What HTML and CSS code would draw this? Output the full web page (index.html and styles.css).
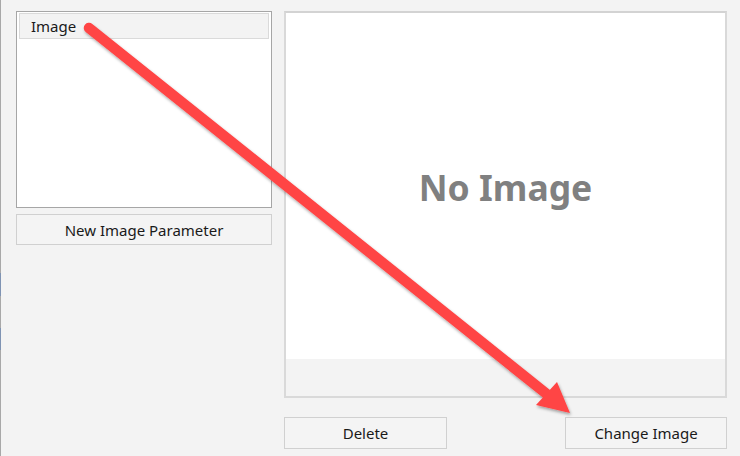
FILE: index.html
```html
<!DOCTYPE html>
<html>
<head>
<meta charset="utf-8">
<link rel="stylesheet" href="styles.css">
</head>
<body>
<div class="window">
  <div class="edge"></div>
  <div class="content">
    <div class="left">
      <div class="list">
        <div class="item">Image</div>
      </div>
      <button class="btn btn-new">New Image Parameter</button>
    </div>
    <div class="right">
      <div class="panel">
        <div class="preview"><span class="noimage">No Image</span></div>
        <div class="panel-foot"></div>
      </div>
      <div class="actions">
        <button class="btn btn-delete">Delete</button>
        <button class="btn btn-change">Change Image</button>
      </div>
    </div>
  </div>
  <svg class="arrow" width="740" height="456" viewBox="0 0 740 456">
    <defs>
      <filter id="sh" x="-10%" y="-10%" width="120%" height="120%">
        <feDropShadow dx="1" dy="2" stdDeviation="1.6" flood-color="#000" flood-opacity="0.35"/>
      </filter>
    </defs>
    <g filter="url(#sh)" fill="#ff4444" stroke="none">
      <line x1="89" y1="28" x2="548" y2="395" stroke="#ff4444" stroke-width="10.5" stroke-linecap="round"/>
      <polygon points="570,413 536,405 557,382"/>
    </g>
  </svg>
</div>
</body>
</html>
```
FILE: styles.css
```css
html, body {
  margin: 0;
  padding: 0;
  background: #f3f3f3;
}
body {
  font-family: "Noto Sans", "Open Sans", sans-serif;
  font-size: 15px;
  color: #1a1a1a;
}
.window {
  position: relative;
  width: 740px;
  height: 456px;
  display: flex;
  overflow: hidden;
}
.edge {
  width: 1px;
  flex: none;
  background: linear-gradient(to bottom, #a8a8a8 0, #a8a8a8 273px, #7f93b3 273px, #7f93b3 296px, #a8a8a8 296px, #a8a8a8 328px, #7f93b3 328px, #7f93b3 350px, #a8a8a8 350px);
}
.content {
  flex: 1;
  display: flex;
  gap: 12px;
  padding: 11px 0 0 15px;
}
.left {
  width: 256px;
  display: flex;
  flex-direction: column;
  gap: 6px;
}
.list {
  height: 197px;
  box-sizing: border-box;
  border: 1px solid #a6a6a6;
  background: #fff;
  padding: 1px 2px;
}
.item {
  height: 26px;
  box-sizing: border-box;
  border: 1px solid #dadada;
  background: #f3f3f3;
  padding-left: 11px;
  line-height: 24px;
  font-size: 15px;
}
.btn {
  font-family: inherit;
  font-size: 15px;
  color: #1a1a1a;
  background: #f4f4f4;
  border: 1px solid #d0d0d0;
  margin: 0;
  padding: 0;
  box-sizing: border-box;
}
.btn-new {
  height: 31px;
  width: 256px;
}
.right {
  width: 443px;
  display: flex;
  flex-direction: column;
  gap: 19px;
}
.panel {
  height: 387px;
  box-sizing: border-box;
  border: 2px solid #d9d9d9;
  border-top-color: #d3d3d3;
  display: flex;
  flex-direction: column;
  background: #f3f3f3;
}
.preview {
  height: 346px;
  background: #fff;
  display: flex;
  align-items: center;
  justify-content: center;
}
.noimage {
  font-size: 35.5px;
  font-weight: bold;
  color: #808080;
  padding: 2px 0 0 0;
}
.panel-foot {
  flex: 1;
}
.actions {
  display: flex;
  justify-content: space-between;
}
.btn-delete {
  width: 163px;
  height: 32px;
}
.btn-change {
  width: 162px;
  height: 32px;
}
.arrow {
  position: absolute;
  left: 0;
  top: 0;
  pointer-events: none;
}
```
